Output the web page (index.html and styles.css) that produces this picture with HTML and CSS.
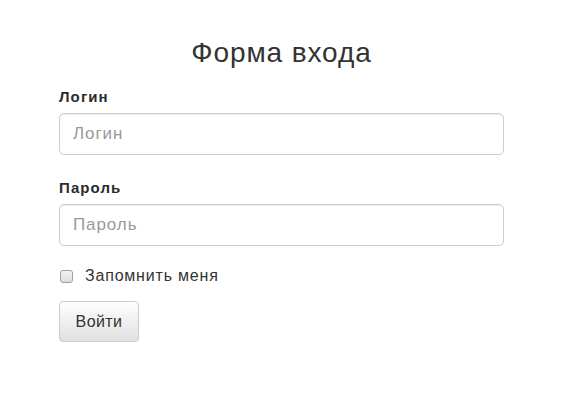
FILE: index.html
```html
<!DOCTYPE html>
<html lang="ru">
<head>
<meta charset="utf-8">
<title>Форма входа</title>
<link rel="stylesheet" href="styles.css">
</head>
<body>
<div class="wrap">
  <h2 class="title">Форма входа</h2>
  <form class="form">
    <div class="group">
      <label class="label" for="login">Логин</label>
      <input class="input" id="login" type="text" placeholder="Логин">
    </div>
    <div class="group">
      <label class="label" for="pass">Пароль</label>
      <input class="input" id="pass" type="password" placeholder="Пароль">
    </div>
    <label class="check">
      <span class="box"></span>
      <span class="check-text">Запомнить меня</span>
    </label>
    <button class="btn" type="button">Войти</button>
  </form>
</div>
</body>
</html>
```
FILE: styles.css
```css
html, body {
  margin: 0;
  padding: 0;
  background: #fff;
}
body {
  font-family: "Liberation Sans", Arial, sans-serif;
  color: #333;
}
.wrap {
  width: 445px;
  margin-left: 59px;
  padding-top: 37px;
}
.title {
  margin: 0 0 19px;
  text-align: center;
  font-weight: normal;
  font-size: 28px;
  letter-spacing: 0.9px;
  line-height: 32px;
  color: #333;
}
.form {
  display: flex;
  flex-direction: column;
}
.group {
  display: flex;
  flex-direction: column;
  margin-bottom: 24px;
}
.label {
  font-weight: bold;
  font-size: 15px;
  letter-spacing: 1.1px;
  line-height: 18px;
  margin-bottom: 7px;
  color: #2b2b2b;
}
.input {
  box-sizing: border-box;
  height: 42px;
  width: 100%;
  border: 1px solid #ccc;
  border-radius: 5px;
  padding: 0 13px;
  font-family: "Liberation Sans", Arial, sans-serif;
  font-size: 17px;
  letter-spacing: 0.9px;
  color: #555;
  box-shadow: inset 0 1px 1px rgba(0,0,0,0.075);
  outline: none;
}
.input::placeholder {
  color: #999;
}
.check {
  display: flex;
  align-items: center;
  gap: 12px;
  margin-top: -4px;
  margin-bottom: 15px;
  padding-left: 1px;
}
.box {
  box-sizing: border-box;
  width: 13px;
  height: 13px;
  border: 1px solid #a0a0a0;
  border-radius: 3px;
  background: linear-gradient(#f4f4f4, #dcdcdc);
}
.check-text {
  font-size: 16px;
  letter-spacing: 0.8px;
  line-height: 20px;
  color: #333;
}
.btn {
  align-self: flex-start;
  box-sizing: border-box;
  width: 80px;
  height: 41px;
  border: 1px solid #ccc;
  border-radius: 4px;
  background: linear-gradient(#fff, #e0e0e0);
  box-shadow: 0 1px 1px rgba(0,0,0,0.075);
  font-family: "Liberation Sans", Arial, sans-serif;
  font-size: 16px;
  letter-spacing: 0.4px;
  color: #333;
  padding: 0;
}
```
